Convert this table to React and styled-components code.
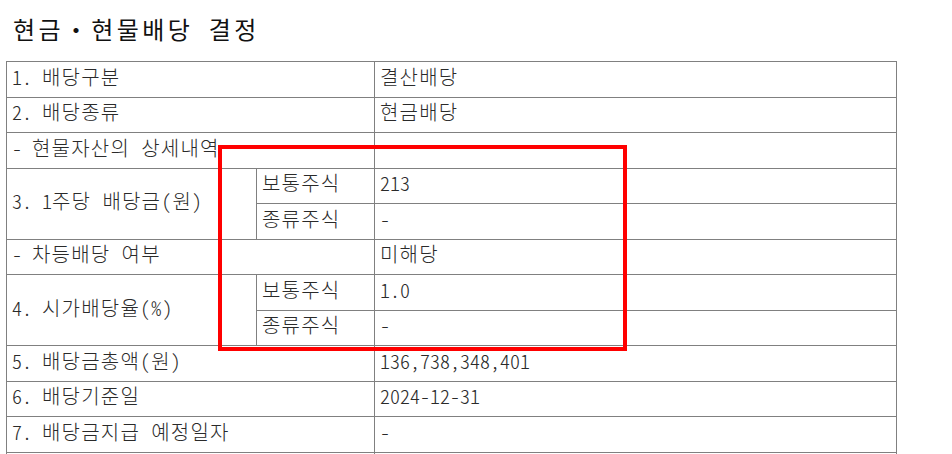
import React from "react";
import styled, { createGlobalStyle } from "styled-components";

const GlobalStyle = createGlobalStyle`
  html, body {
    margin: 0;
    padding: 0;
    background: #ffffff;
  }
  body {
    font-family: "Noto Sans CJK KR", "Noto Sans", sans-serif;
    color: #111111;
  }
`;

const Page = styled.div`
  padding: 14px 0 0 6px;
`;

const Title = styled.h1`
  margin: 0 0 17px 7px;
  font-size: 24px;
  line-height: 30px;
  font-weight: 400;
  letter-spacing: 3.4px;
  color: #111111;
  font-feature-settings: "hwid";
  white-space: nowrap;
`;

const TableWrap = styled.div`
  position: relative;
  width: 891px;
`;

const Table = styled.table`
  border-collapse: collapse;
  table-layout: fixed;
  width: 891px;
  font-size: 20px;
  font-weight: 300;
  font-feature-settings: "hwid";
  color: #2a2a2a;
`;

const Row = styled.tr`
  height: 35.5px;
`;

const Cell = styled.td`
  border: 1px solid #808080;
  padding: 0 0 5px 5px;
  line-height: 1;
  white-space: nowrap;
  vertical-align: middle;
  overflow: hidden;
  letter-spacing: ${(p) => (p.$num ? "0" : "1.2px")};
`;

const Num = styled.span`
  letter-spacing: 0;
`;

const Highlight = styled.div`
  position: absolute;
  left: 212px;
  top: 84px;
  width: 409px;
  height: 206px;
  box-sizing: border-box;
  border: 4.5px solid #ff0000;
  pointer-events: none;
`;

export default function App() {
  return (
    <>
      <GlobalStyle />
      <Page>
        <Title>현금・현물배당 결정</Title>
        <TableWrap>
          <Table>
            <colgroup>
              <col style={{ width: "250px" }} />
              <col style={{ width: "118px" }} />
              <col style={{ width: "522px" }} />
            </colgroup>
            <tbody>
              <Row>
                <Cell colSpan={2}><Num>1. </Num>배당구분</Cell>
                <Cell>결산배당</Cell>
              </Row>
              <Row>
                <Cell colSpan={2}><Num>2. </Num>배당종류</Cell>
                <Cell>현금배당</Cell>
              </Row>
              <Row>
                <Cell colSpan={2}><Num>- </Num>현물자산의 상세내역</Cell>
                <Cell />
              </Row>
              <Row>
                <Cell rowSpan={2}><Num>3. 1</Num>주당 배당금(원)</Cell>
                <Cell>보통주식</Cell>
                <Cell $num>213</Cell>
              </Row>
              <Row>
                <Cell>종류주식</Cell>
                <Cell $num>-</Cell>
              </Row>
              <Row>
                <Cell colSpan={2}><Num>- </Num>차등배당 여부</Cell>
                <Cell>미해당</Cell>
              </Row>
              <Row>
                <Cell rowSpan={2}><Num>4. </Num>시가배당율(%)</Cell>
                <Cell>보통주식</Cell>
                <Cell $num>1.0</Cell>
              </Row>
              <Row>
                <Cell>종류주식</Cell>
                <Cell $num>-</Cell>
              </Row>
              <Row>
                <Cell colSpan={2}><Num>5. </Num>배당금총액(원)</Cell>
                <Cell $num>136,738,348,401</Cell>
              </Row>
              <Row>
                <Cell colSpan={2}><Num>6. </Num>배당기준일</Cell>
                <Cell $num>2024-12-31</Cell>
              </Row>
              <Row>
                <Cell colSpan={2}><Num>7. </Num>배당금지급 예정일자</Cell>
                <Cell $num>-</Cell>
              </Row>
              <Row>
                <Cell colSpan={2}><Num>8. </Num>주주총회 개최여부</Cell>
                <Cell>개최</Cell>
              </Row>
            </tbody>
          </Table>
          <Highlight />
        </TableWrap>
      </Page>
    </>
  );
}
